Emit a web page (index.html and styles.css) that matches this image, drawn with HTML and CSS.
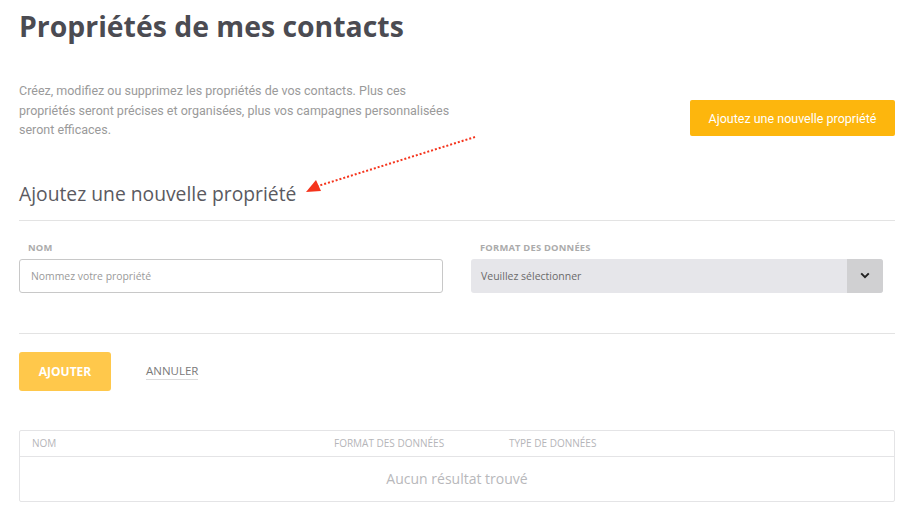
FILE: index.html
```html
<!DOCTYPE html>
<html lang="fr">
<head>
<meta charset="utf-8">
<title>Propriétés de mes contacts</title>
<link rel="stylesheet" href="styles.css">
</head>
<body>
<div class="page">
  <h1 class="title">Propriétés de mes contacts</h1>
  <div class="intro">
    <p class="desc">Créez, modifiez ou supprimez les propriétés de vos contacts. Plus ces propriétés seront précises et organisées, plus vos campagnes personnalisées seront efficaces.</p>
    <button class="btn-primary">Ajoutez une nouvelle propriété</button>
  </div>
  <h2 class="subtitle">Ajoutez une nouvelle propriété</h2>
  <div class="form-row">
    <div class="field field-name">
      <label class="label">NOM</label>
      <div class="input">Nommez votre propriété</div>
    </div>
    <div class="field field-format">
      <label class="label">FORMAT DES DONNÉES</label>
      <div class="select">
        <span class="select-text">Veuillez sélectionner</span>
        <span class="select-btn">
          <svg width="10" height="7" viewBox="0 0 10 7"><path d="M1.2 1.4 L5 5.2 L8.8 1.4" fill="none" stroke="#222" stroke-width="2"/></svg>
        </span>
      </div>
    </div>
  </div>
  <div class="actions">
    <button class="btn-add">AJOUTER</button>
    <a class="btn-cancel">ANNULER</a>
  </div>
  <div class="table">
    <div class="thead">
      <span>NOM</span>
      <span>FORMAT DES DONNÉES</span>
      <span>TYPE DE DONNÉES</span>
    </div>
    <div class="tbody">Aucun résultat trouvé</div>
  </div>
  <svg class="arrow" width="915" height="516" viewBox="0 0 915 516">
    <line x1="475" y1="137" x2="318" y2="186" stroke="#f5341c" stroke-width="2" stroke-dasharray="2 2"/>
    <polygon points="306,192 316,180 321,191" fill="#f5341c"/>
  </svg>
</div>
</body>
</html>
```
FILE: styles.css
```css
* { box-sizing: border-box; }
html, body { margin: 0; padding: 0; background: #fff; }
.page {
  position: relative;
  width: 915px;
  height: 516px;
  padding: 0 20px 0 19px;
  overflow: hidden;
}
.title {
  margin: 0;
  padding-top: 6px;
  font-family: "Open Sans", sans-serif;
  font-weight: 700;
  font-size: 28.4px;
  line-height: 40px;
  color: #4b4b52;
}
.intro {
  display: flex;
  justify-content: space-between;
  align-items: flex-start;
  margin-top: 35px;
}
.desc {
  margin: 0;
  width: 440px;
  font-family: Roboto, sans-serif;
  font-size: 12.5px;
  line-height: 19.5px;
  color: #9a9a9a;
}
.btn-primary {
  margin-top: 19px;
  width: 205px;
  height: 36px;
  border: none;
  border-radius: 2px;
  background: #fdb60d;
  color: #fff;
  font-family: Roboto, sans-serif;
  font-size: 12.5px;
  padding: 0;
}
.subtitle {
  margin: 42px 0 0 0;
  padding-bottom: 14px;
  border-bottom: 1px solid #e3e3e3;
  font-family: "Open Sans", sans-serif;
  font-weight: 400;
  font-size: 19.3px;
  line-height: 24px;
  color: #5a5a61;
}
.form-row {
  display: flex;
  gap: 28px;
  margin-top: 21px;
  padding-bottom: 40px;
  border-bottom: 1px solid #e3e3e3;
}
.field { display: flex; flex-direction: column; }
.field-name { width: 424px; }
.field-format { width: 412px; }
.label {
  padding-left: 9px;
  font-family: "Open Sans", sans-serif;
  font-weight: 700;
  font-size: 9.4px;
  letter-spacing: 0.2px;
  line-height: 12px;
  color: #ababab;
  margin-bottom: 5px;
}
.input {
  height: 34px;
  border: 1px solid #c8c8c8;
  border-radius: 3px;
  padding: 0 11px;
  display: flex;
  align-items: center;
  font-family: "Open Sans", sans-serif;
  font-size: 10.4px;
  color: #9a9a9a;
}
.select {
  height: 34px;
  border-radius: 3px;
  background: #e6e6ea;
  display: flex;
  align-items: center;
  overflow: hidden;
}
.select-text {
  flex: 1;
  padding-left: 10px;
  font-family: "Open Sans", sans-serif;
  font-size: 10.5px;
  color: #6a6a6a;
}
.select-btn {
  width: 36px;
  height: 100%;
  background: #d0d0d2;
  display: flex;
  align-items: center;
  justify-content: center;
}
.actions {
  display: flex;
  align-items: center;
  gap: 35px;
  margin-top: 18px;
}
.btn-add {
  width: 92px;
  height: 39px;
  border: none;
  border-radius: 3px;
  background: #ffc84b;
  color: #fff;
  font-family: "Open Sans", sans-serif;
  font-weight: 700;
  font-size: 12px;
  padding: 0;
}
.btn-cancel {
  font-family: "Open Sans", sans-serif;
  font-size: 11.5px;
  color: #7a7a7a;
  padding-bottom: 1px;
  border-bottom: 1px solid #dcdcdc;
  line-height: 14px;
  margin-top: 2px;
}
.table {
  margin-top: 39px;
  border: 1px solid #e4e4e6;
  border-radius: 2px;
}
.thead {
  display: grid;
  grid-template-columns: 302px 175px 1fr;
  height: 26px;
  align-items: center;
  padding-left: 12px;
  border-bottom: 1px solid #e4e4e6;
  font-family: "Open Sans", sans-serif;
  font-size: 10px;
  font-weight: 400;
  color: #b5b5b9;
}
.tbody {
  height: 44px;
  display: flex;
  align-items: center;
  justify-content: center;
  font-family: "Open Sans", sans-serif;
  font-size: 14px;
  color: #b8b8bb;
}
.arrow {
  position: absolute;
  left: 0;
  top: 0;
  pointer-events: none;
}
```
